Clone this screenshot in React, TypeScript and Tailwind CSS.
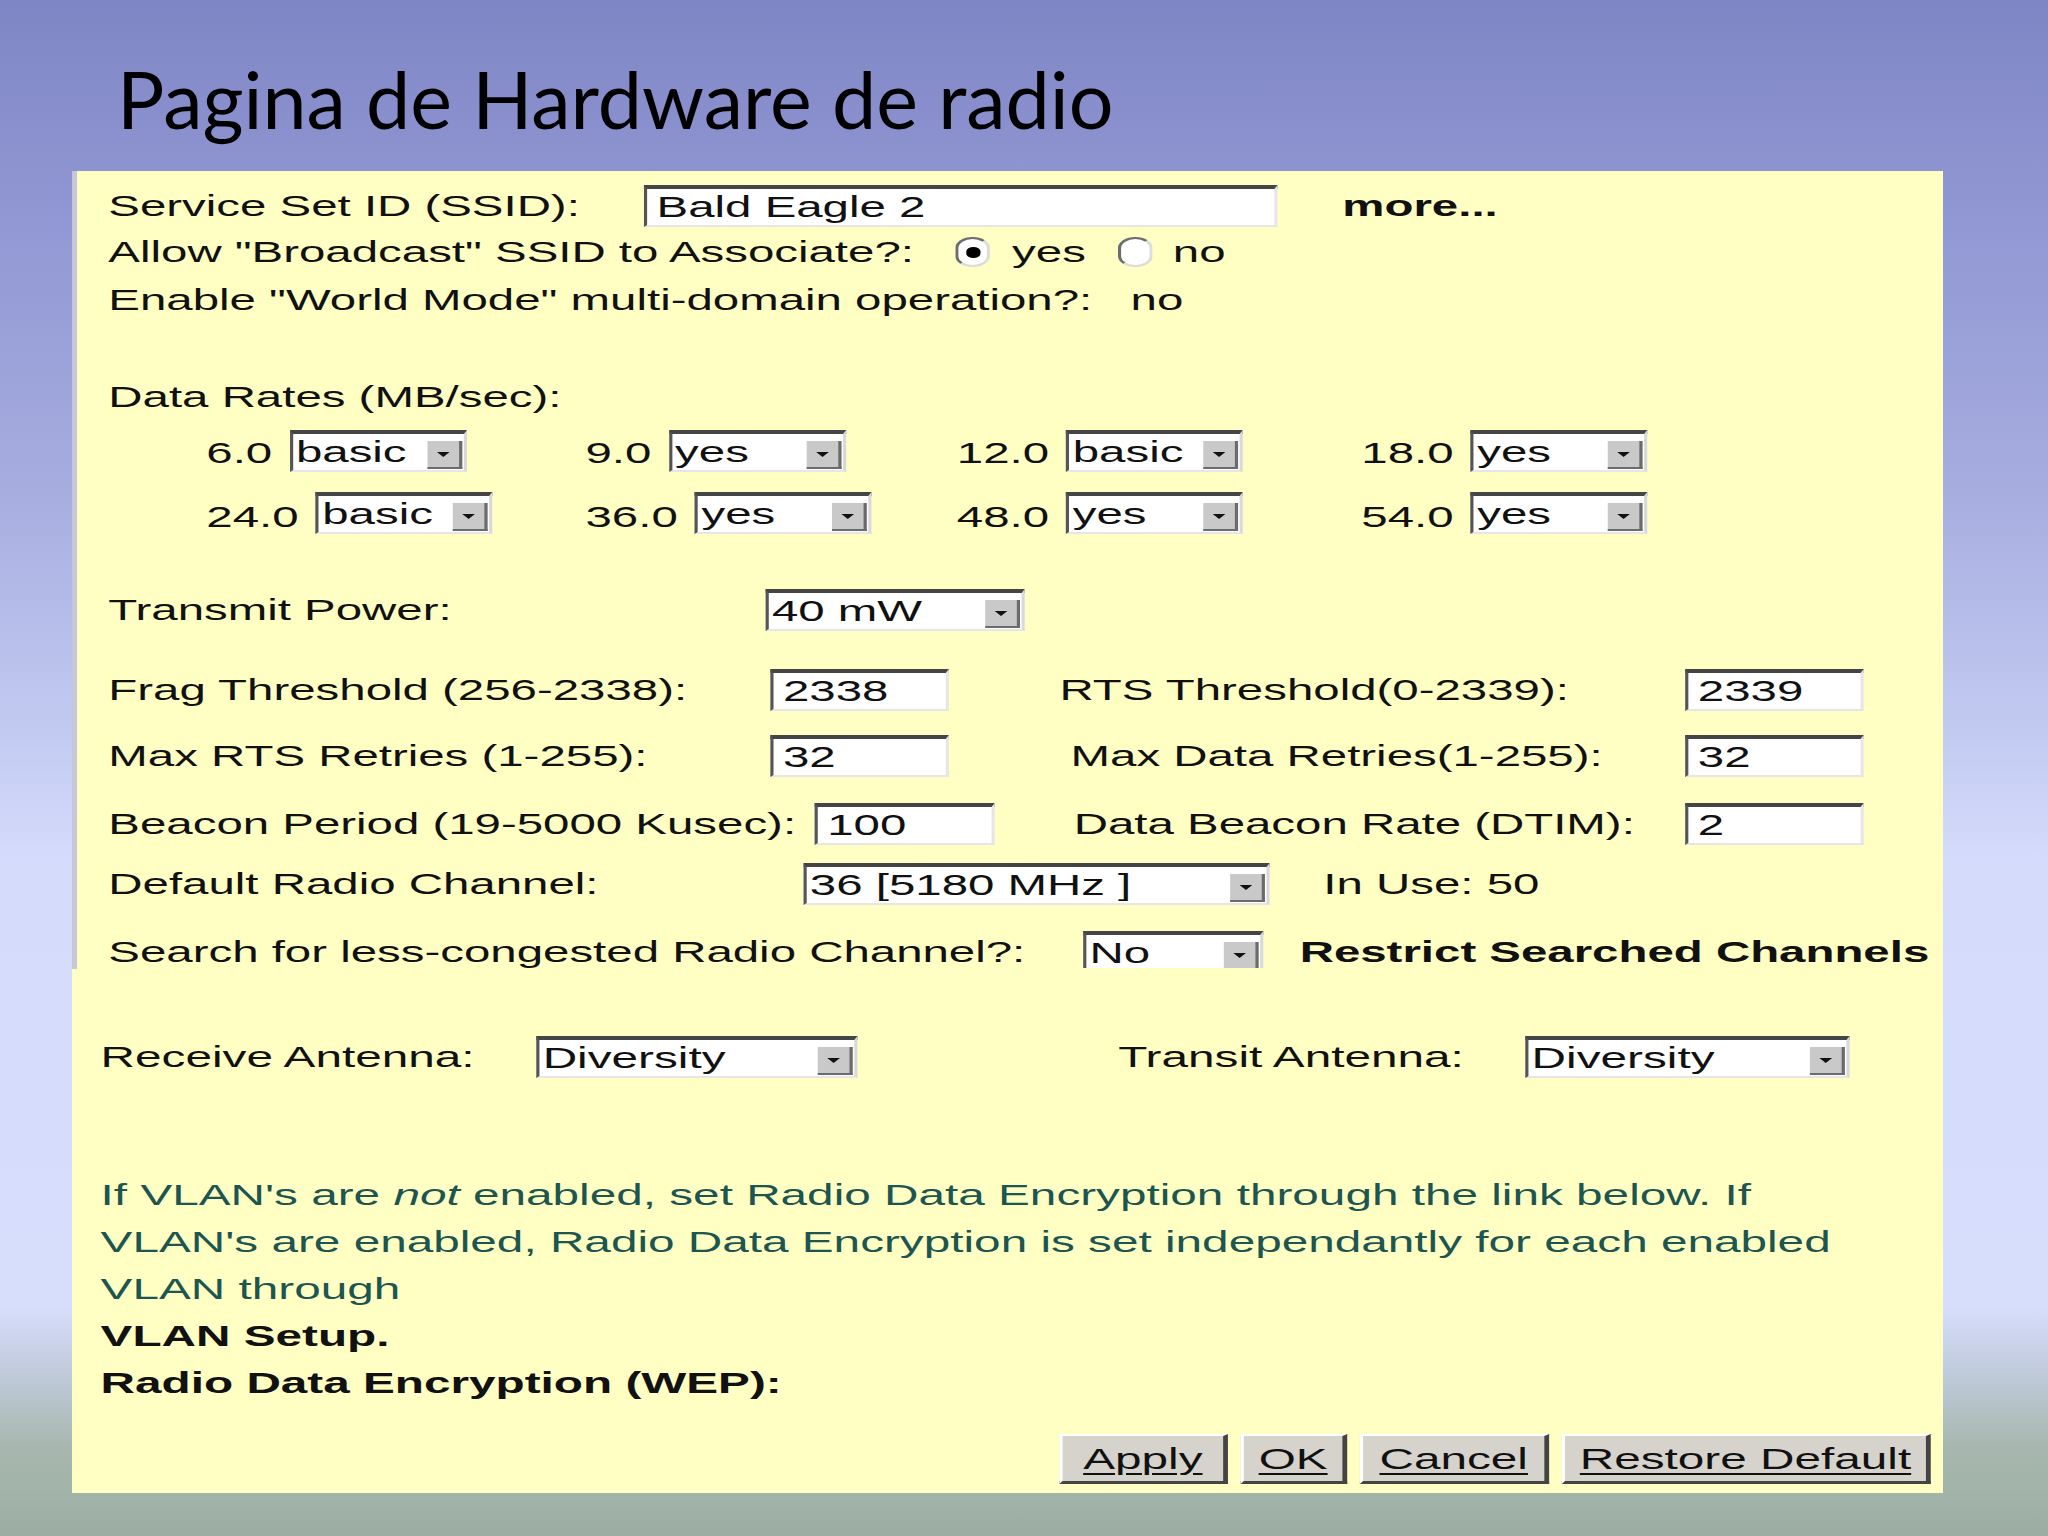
import React from 'react';

const Arrow = () => (
  <span className="ml-auto mr-[1px] mb-[1px] self-end flex h-[28px] w-[22px] items-center justify-center border-r-2 border-b-2 border-[#6b6b6b] bg-[#c9c9c9]">
    <svg width="10" height="7" viewBox="0 0 10 7">
      <path d="M1 1 L9 1 L5 6 Z" fill="#111" />
    </svg>
  </span>
);

const Select = ({ w, value }: { w: string; value: string }) => (
  <span className={`${w} flex h-[42px] items-stretch border-t-4 border-l-2 border-t-[#454545] border-l-[#555] border-b-2 border-r-2 border-b-[#e6e6e6] border-r-[#d9d9d9] bg-white`}>
    <span className="flex items-center pl-[2px] leading-none whitespace-nowrap">{value}</span>
    <Arrow />
  </span>
);

const Input = ({ w, value }: { w: string; value: string }) => (
  <span className={`${w} flex h-[42px] items-center border-t-4 border-l-2 border-t-[#454545] border-l-[#555] border-b-2 border-r-2 border-b-[#e6e6e6] border-r-[#e6e6e6] bg-white pl-[6px] leading-none`}>
    {value}
  </span>
);

const Radio = ({ checked }: { checked?: boolean }) => (
  <span className="flex h-[30px] w-[22px] items-center justify-center rounded-full border-2 border-t-[#6d6d6d] border-l-[#6d6d6d] border-b-[#dcdcdc] border-r-[#dcdcdc] bg-white">
    {checked && <span className="h-[11px] w-[9px] rounded-full bg-black" />}
  </span>
);

const Button = ({ w, label }: { w: string; label: string }) => (
  <span className={`${w} flex h-[50px] items-center justify-center border-t-2 border-l-2 border-t-white border-l-white border-r-[3px] border-b-[3px] border-r-[#444] border-b-[#444] bg-[#d6d3cd] leading-none underline decoration-2 underline-offset-4`}>
    {label}
  </span>
);

const rates = [
  [
    { r: '6.0', v: 'basic', w: 'w-[240px]' },
    { r: '9.0', v: 'yes', w: 'w-[235px]' },
    { r: '12.0', v: 'basic', w: 'w-[256px]' },
    { r: '18.0', v: 'yes', w: 'w-[180px]' },
  ],
  [
    { r: '24.0', v: 'basic', w: 'w-[240px]' },
    { r: '36.0', v: 'yes', w: 'w-[235px]' },
    { r: '48.0', v: 'yes', w: 'w-[256px]' },
    { r: '54.0', v: 'yes', w: 'w-[180px]' },
  ],
];

export default function App() {
  return (
    <div className="h-[1536px] w-[2048px] overflow-hidden bg-[linear-gradient(to_bottom,#7f86c5_0%,#959cd6_18%,#a7addf_32%,#c4cbf2_48%,#d4dbfb_56%,#d6defc_85%,#c2ccde_89%,#a8b8b0_94%,#9caea4_100%)]">
      <div className="h-[171px] pl-[117px] pt-[59px]">
        <h1 className="font-['Lato',sans-serif] text-[79px] leading-none text-black">Pagina de Hardware de radio</h1>
      </div>

      <div className="ml-[72px] flex h-[1322px] w-[1871px] flex-col bg-[#ffffc3] font-['Liberation_Sans',Arial,sans-serif] text-[30px] text-[#111]">
        {/* upper screenshot */}
        <div className="h-[798px] overflow-hidden shadow-[inset_5px_0_0_#c6c7d8]">
          <div className="flex w-[1184px] origin-left scale-x-[1.58] flex-col pt-[12px]">
            <div className="flex h-[46px] items-center pl-[23px] leading-none">
              <span className="w-[339px]">Service Set ID (SSID):</span>
              <Input w="w-[401px]" value="Bald Eagle 2" />
              <span className="ml-[41px] font-bold">more...</span>
            </div>
            <div className="flex h-[46px] items-center pl-[23px] leading-none">
              <span className="w-[536px]">Allow "Broadcast" SSID to Associate?:</span>
              <Radio checked />
              <span className="ml-[14px]">yes</span>
              <span className="ml-[20px]"><Radio /></span>
              <span className="ml-[13px]">no</span>
            </div>
            <div className="mt-[2px] flex h-[46px] items-center pl-[23px] leading-none">
              <span className="w-[647px]">Enable "World Mode" multi-domain operation?:</span>
              <span>no</span>
            </div>

            <div className="mt-[51px] flex h-[46px] items-center pl-[23px] leading-none">Data Rates (MB/sec):</div>
            {rates.map((row, i) => (
              <div key={i} className="flex h-[62px] items-center pl-[85px] leading-none">
                {row.map((c) => (
                  <span key={c.r} className={`${c.w} flex items-center`}>
                    <span className={i === 0 ? 'mt-[4px]' : 'mt-[8px]'}>{c.r}</span>
                    <span className="ml-[11px]">
                      <Select w="w-[112px]" value={c.v} />
                    </span>
                  </span>
                ))}
              </div>
            ))}

            <div className="mt-[43px] flex h-[46px] items-center pl-[23px] leading-none">
              <span className="w-[416px]">Transmit Power:</span>
              <Select w="w-[164px]" value="40 mW" />
            </div>
            <div className="mt-[34px] flex h-[46px] items-center pl-[23px] leading-none">
              <span className="w-[419px]">Frag Threshold (256-2338):</span>
              <Input w="w-[113px]" value="2338" />
              <span className="ml-[70px] w-[396px]">RTS Threshold(0-2339):</span>
              <Input w="w-[113px]" value="2339" />
            </div>
            <div className="mt-[20px] flex h-[46px] items-center pl-[23px] leading-none">
              <span className="w-[419px]">Max RTS Retries (1-255):</span>
              <Input w="w-[113px]" value="32" />
              <span className="ml-[77px] w-[389px]">Max Data Retries(1-255):</span>
              <Input w="w-[113px]" value="32" />
            </div>
            <div className="mt-[22px] flex h-[46px] items-center pl-[23px] leading-none">
              <span className="w-[447px]">Beacon Period (19-5000 Kusec):</span>
              <Input w="w-[114px]" value="100" />
              <span className="ml-[50px] w-[387px]">Data Beacon Rate (DTIM):</span>
              <Input w="w-[113px]" value="2" />
            </div>
            <div className="mt-[14px] flex h-[46px] items-center pl-[23px] leading-none">
              <span className="w-[440px]">Default Radio Channel:</span>
              <Select w="w-[295px]" value="36 [5180 MHz ]" />
              <span className="ml-[34px]">In Use: 50</span>
            </div>
            <div className="mt-[22px] h-[39px] overflow-hidden">
              <div className="flex h-[46px] items-center pl-[23px] leading-none">
                <span className="w-[617px]">Search for less-congested Radio Channel?:</span>
                <Select w="w-[114px]" value="No" />
                <span className="ml-[23px] font-bold">Restrict Searched Channels</span>
              </div>
            </div>
          </div>
        </div>

        {/* lower screenshot */}
        <div className="h-[524px] overflow-hidden">
          <div className="flex w-[1177px] origin-left scale-x-[1.59] flex-col pt-[65px]">
            <div className="flex h-[46px] items-center pl-[18px] leading-none">
              <span className="w-[274px]">Receive Antenna:</span>
              <Select w="w-[202px]" value="Diversity" />
              <span className="ml-[164px] w-[256px]">Transit Antenna:</span>
              <Select w="w-[204px]" value="Diversity" />
            </div>

            <p className="mt-[91px] pl-[18px] leading-[47px] text-[#1d5550]">
              If VLAN's are <i>not</i> enabled, set Radio Data Encryption through the link below. If
              <br />
              VLAN's are enabled, Radio Data Encryption is set independantly for each enabled
              <br />
              VLAN through
            </p>
            <p className="pl-[18px] leading-[47px] font-bold text-[#111]">VLAN Setup.</p>
            <p className="pl-[18px] leading-[47px] font-bold text-[#111]">Radio Data Encryption (WEP):</p>

            <div className="mt-[28px] flex gap-[8px] pl-[621px]">
              <Button w="w-[106px]" label="Apply" />
              <Button w="w-[67px]" label="OK" />
              <Button w="w-[119px]" label="Cancel" />
              <Button w="w-[232px]" label="Restore Default" />
            </div>
          </div>
        </div>
      </div>
    </div>
  );
}
